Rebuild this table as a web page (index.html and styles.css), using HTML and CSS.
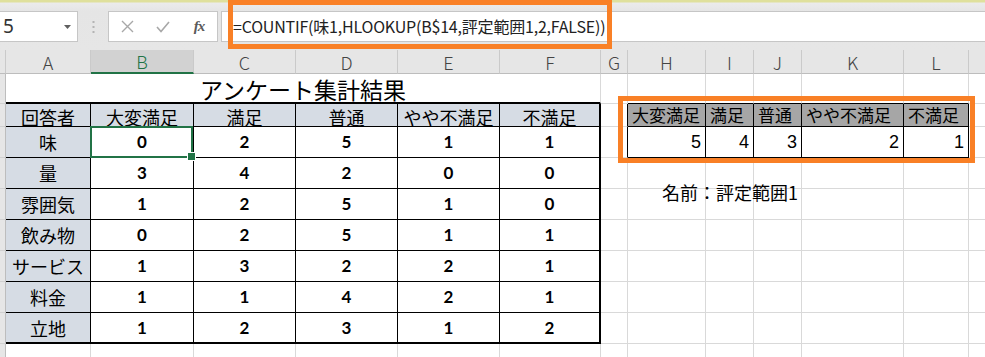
FILE: index.html
```html
<!DOCTYPE html>
<html lang="ja">
<head>
<meta charset="utf-8">
<title>アンケート集計結果</title>
<link rel="stylesheet" href="styles.css">
</head>
<body>
<div class="toolbar">
  <div class="namebox"><span class="nb-text">5</span>
    <svg class="nb-arrow" width="7" height="4" viewBox="0 0 7 4"><polygon points="0,0 7,0 3.5,4" fill="#5f5f5f"/></svg>
  </div>
  <div class="grip">
    <svg width="3" height="12" viewBox="0 0 3 12"><rect x="0.5" y="0" width="2" height="2" fill="#b4b4b4"/><rect x="0.5" y="5" width="2" height="2" fill="#b4b4b4"/><rect x="0.5" y="10" width="2" height="2" fill="#b4b4b4"/></svg>
  </div>
  <div class="btns">
    <span class="btn"><svg width="13" height="13" viewBox="0 0 13 13"><path d="M1 1 L12 12 M12 1 L1 12" stroke="#a8a8a8" stroke-width="1.4" fill="none"/></svg></span>
    <span class="btn"><svg width="14" height="12" viewBox="0 0 14 12"><path d="M1 6 L5 10.5 L13 1" stroke="#a8a8a8" stroke-width="1.6" fill="none"/></svg></span>
    <span class="btn fx">fx</span>
  </div>
  <div class="formula">=COUNTIF(味1,HLOOKUP(B$14,評定範囲1,2,FALSE))</div>
</div>

<div class="sheet">
  <!-- column headers -->
  <div class="ch"></div>
  <div class="ch">A</div>
  <div class="ch sel">B</div>
  <div class="ch">C</div>
  <div class="ch">D</div>
  <div class="ch">E</div>
  <div class="ch">F</div>
  <div class="ch">G</div>
  <div class="ch">H</div>
  <div class="ch">I</div>
  <div class="ch">J</div>
  <div class="ch">K</div>
  <div class="ch">L</div>
  <div class="ch"></div>

  <!-- row 1 -->
  <div class="rh"></div>
  <div class="c title">アンケート集計結果</div>
  <div class="c"></div>
  <div class="c tb"></div><div class="c tb"></div><div class="c tb"></div><div class="c tb"></div><div class="c tb"></div>
  <div class="c"></div>

  <!-- row 2 -->
  <div class="rh"></div>
  <div class="th">回答者</div>
  <div class="th">大変満足</div>
  <div class="th">満足</div>
  <div class="th">普通</div>
  <div class="th">やや不満足</div>
  <div class="th rb2">不満足</div>
  <div class="c lb"></div>
  <div class="rth">大変満足</div>
  <div class="rth">満足</div>
  <div class="rth">普通</div>
  <div class="rth">やや不満足</div>
  <div class="rth">不満足</div>
  <div class="c"></div>

  <!-- row 3 -->
  <div class="rh"></div>
  <div class="lab">味</div>
  <div class="num active">0</div><div class="num">2</div><div class="num">5</div><div class="num">1</div><div class="num rb2">1</div>
  <div class="c lb"></div>
  <div class="rv">5</div><div class="rv">4</div><div class="rv">3</div><div class="rv">2</div><div class="rv">1</div>
  <div class="c"></div>

  <!-- row 4 -->
  <div class="rh"></div>
  <div class="lab">量</div>
  <div class="num">3</div><div class="num">4</div><div class="num">2</div><div class="num">0</div><div class="num rb2">0</div>
  <div class="c"></div><div class="c"></div><div class="c"></div><div class="c"></div><div class="c"></div><div class="c"></div><div class="c"></div>

  <!-- row 5 -->
  <div class="rh"></div>
  <div class="lab">雰囲気</div>
  <div class="num">1</div><div class="num">2</div><div class="num">5</div><div class="num">1</div><div class="num rb2">0</div>
  <div class="c"></div><div class="c"></div><div class="c"></div><div class="c"></div><div class="c"></div><div class="c"></div><div class="c"></div>

  <!-- row 6 -->
  <div class="rh"></div>
  <div class="lab">飲み物</div>
  <div class="num">0</div><div class="num">2</div><div class="num">5</div><div class="num">1</div><div class="num rb2">1</div>
  <div class="c"></div><div class="c"></div><div class="c"></div><div class="c"></div><div class="c"></div><div class="c"></div><div class="c"></div>

  <!-- row 7 -->
  <div class="rh"></div>
  <div class="lab">サービス</div>
  <div class="num">1</div><div class="num">3</div><div class="num">2</div><div class="num">2</div><div class="num rb2">1</div>
  <div class="c"></div><div class="c"></div><div class="c"></div><div class="c"></div><div class="c"></div><div class="c"></div><div class="c"></div>

  <!-- row 8 -->
  <div class="rh"></div>
  <div class="lab">料金</div>
  <div class="num">1</div><div class="num">1</div><div class="num">4</div><div class="num">2</div><div class="num rb2">1</div>
  <div class="c"></div><div class="c"></div><div class="c"></div><div class="c"></div><div class="c"></div><div class="c"></div><div class="c"></div>

  <!-- row 9 -->
  <div class="rh"></div>
  <div class="lab bb2">立地</div>
  <div class="num bb2">1</div><div class="num bb2">2</div><div class="num bb2">3</div><div class="num bb2">1</div><div class="num rb2 bb2">2</div>
  <div class="c"></div><div class="c"></div><div class="c"></div><div class="c"></div><div class="c"></div><div class="c"></div><div class="c"></div>

  <!-- row 10 -->
  <div class="rh"></div>
  <div class="c"></div><div class="c"></div><div class="c"></div><div class="c"></div><div class="c"></div><div class="c"></div>
  <div class="c"></div><div class="c"></div><div class="c"></div><div class="c"></div><div class="c"></div><div class="c"></div><div class="c"></div>
</div>

<div class="hl hl-formula"></div>
<div class="hl hl-range"></div>
<div class="name-note">名前：評定範囲1</div>
</body>
</html>
```

FILE: styles.css
```css
* {
  box-sizing: border-box;
  margin: 0;
  padding: 0;
}

html, body {
  width: 985px;
  height: 357px;
  overflow: hidden;
  background: #fff;
}

body {
  position: relative;
  font-family: "Noto Sans CJK JP", "Noto Sans", sans-serif;
  color: #000;
}

/* ---------- formula toolbar ---------- */
.toolbar {
  height: 50px;
  display: flex;
  align-items: flex-start;
  padding-top: 11px;
  background: linear-gradient(#dfe09c 0, #dfe09c 2px, #ebebeb 3px, #e5e5e5 11px, #e6e6e6 100%);
}

.namebox {
  flex: none;
  width: 79px;
  height: 31px;
  margin-left: -1px;
  background: #fff;
  border: 1px solid #c6c6c6;
  display: flex;
  align-items: center;
  padding-left: 3px;
  padding-right: 6px;
}

.nb-text {
  font-family: "Noto Sans", sans-serif;
  font-size: 19px;
  color: #333;
  line-height: 1;
}

.nb-arrow {
  margin-left: auto;
}

.grip {
  flex: none;
  width: 30px;
  height: 31px;
  display: flex;
  align-items: center;
  justify-content: center;
}

.btns {
  flex: none;
  width: 110px;
  height: 31px;
  background: #fff;
  border: 1px solid #c6c6c6;
  display: grid;
  grid-template-columns: repeat(3, 36px);
  align-items: center;
  justify-items: center;
}

.btn {
  display: flex;
  align-items: center;
  justify-content: center;
}

.fx {
  font-family: "Liberation Serif", serif;
  font-style: italic;
  font-weight: 700;
  font-size: 15px;
  color: #5a5a5a;
  letter-spacing: -1px;
}

.formula {
  flex: none;
  width: 780px;
  height: 31px;
  margin-left: 3px;
  background: #fff;
  border: 1px solid #c6c6c6;
  padding-left: 11px;
  font-size: 16px;
  letter-spacing: -0.2px;
  line-height: 29px;
  color: #222;
  white-space: nowrap;
}

/* ---------- sheet grid ---------- */
.sheet {
  display: grid;
  grid-template-columns: 6px 85px 103px 102px 102px 102px 101px 27px 78px 48px 48px 102px 65px 40px;
  grid-template-rows: 24px 30px 23px repeat(7, 31px) 20px;
}

.sheet > div {
  display: flex;
  align-items: center;
  justify-content: center;
  white-space: nowrap;
}

.ch {
  background: #e6e6e6;
  border-right: 1px solid #cacaca;
  border-bottom: 1px solid #bdbdbd;
  font-size: 18px;
  font-weight: 300;
  color: #444;
  line-height: 1;
}

.ch.sel {
  background: #d2d2d2;
  color: #217346;
  border-bottom: 2px solid #217346;
}

.rh {
  background: #e6e6e6;
  border-right: 1px solid #bdbdbd;
  border-bottom: 1px solid #d0d0d0;
}

.c {
  border-right: 1px solid #d9d9d9;
  border-bottom: 1px solid #d9d9d9;
}

.c.tb {
  border-bottom-color: #000;
}

.c.lb {
  border-right-color: #000;
}

.title {
  grid-column: span 6;
  border-bottom: 2px solid #000;
  font-size: 23px;
  line-height: 23px;
  padding-top: 2px;
}

.th {
  background: #d6dce4;
  border-right: 1px solid #000;
  border-bottom: 1px solid #000;
  font-size: 18px;
  line-height: 18px;
  align-items: flex-end !important;
}

.lab {
  background: #d6dce4;
  border-right: 1px solid #000;
  border-bottom: 1px solid #000;
  font-size: 18px;
  line-height: 20px;
}

.num {
  border-right: 1px solid #000;
  border-bottom: 1px solid #000;
  font-family: "Lato", "Noto Sans", sans-serif;
  font-weight: 700;
  font-size: 17px;
  line-height: 20px;
}

.rb2 {
  border-right-width: 2px !important;
}

.bb2 {
  border-bottom-width: 2px !important;
}

.rth {
  background: #a6a6a6;
  border-right: 1px solid #000;
  border-bottom: 1px solid #000;
  font-size: 17px;
  line-height: 18px;
  justify-content: flex-start !important;
  padding-left: 4px;
}

.rv {
  border-right: 1px solid #000;
  border-bottom: 1px solid #000;
  font-family: "Liberation Sans", "Noto Sans", sans-serif;
  font-size: 18px;
  line-height: 20px;
  justify-content: flex-end !important;
  padding-right: 4px;
}

/* active cell */
.active {
  position: relative;
}

.active::after {
  content: "";
  position: absolute;
  left: -1px;
  top: -1px;
  right: 0;
  bottom: -1px;
  border: 2px solid #217346;
}

.active::before {
  content: "";
  position: absolute;
  right: -3px;
  bottom: -4px;
  width: 7px;
  height: 7px;
  background: #217346;
  border: 1px solid #fff;
  z-index: 1;
}

/* ---------- overlays ---------- */
.hl {
  position: absolute;
  border: 5px solid #f98026;
}

.hl-formula {
  left: 228px;
  top: 0;
  width: 384px;
  height: 49px;
}

.hl-range {
  left: 618px;
  top: 96px;
  width: 357px;
  height: 67px;
}

.name-note {
  position: absolute;
  left: 662px;
  top: 182px;
  font-size: 18px;
  line-height: 20px;
  white-space: nowrap;
}
```
